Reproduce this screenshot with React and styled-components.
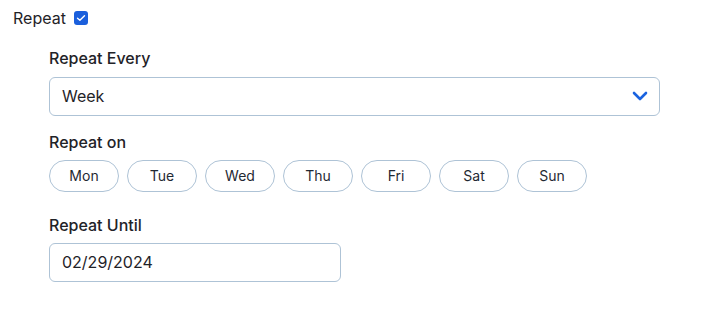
import React, { useState } from 'react';
import styled, { createGlobalStyle } from 'styled-components';

const GlobalStyle = createGlobalStyle`
  body {
    margin: 0;
    background: #ffffff;
    font-family: Inter, "Noto Sans", sans-serif;
    color: #1f2328;
  }
`;

const Page = styled.div`
  padding: 9px 13px;
`;

const RepeatRow = styled.label`
  display: flex;
  align-items: center;
  gap: 8px;
  height: 19px;
  font-size: 16px;
  line-height: 19px;
`;

const CheckBox = styled.span`
  width: 14px;
  height: 14px;
  border-radius: 3px;
  background: #1b5fdc;
  display: flex;
  align-items: center;
  justify-content: center;
  margin-top: -2px;
`;

const Options = styled.div`
  padding-left: 36px;
  margin-top: 21px;
`;

const Field = styled.div`
  display: flex;
  flex-direction: column;
  gap: ${p => p.$gap || 8}px;
  margin-top: ${p => p.$top || 0}px;
`;

const Label = styled.div`
  font-size: 16px;
  line-height: 19px;
  font-weight: 500;
`;

const SelectBox = styled.div`
  box-sizing: border-box;
  width: 611px;
  height: 39px;
  border: 1px solid #aec3d6;
  border-radius: 6px;
  padding: 0 11px 0 12px;
  display: flex;
  align-items: center;
  justify-content: space-between;
  font-size: 16px;
`;

const Days = styled.div`
  display: flex;
  gap: 8px;
`;

const Day = styled.button`
  box-sizing: border-box;
  width: 70px;
  height: 32px;
  border: 1px solid #aec3d6;
  border-radius: 16px;
  background: ${p => (p.$on ? '#e8f0fd' : '#ffffff')};
  font-family: Inter, "Noto Sans", sans-serif;
  font-size: 14px;
  color: #1f2933;
  padding: 0;
  cursor: pointer;
`;

const DateInput = styled.div`
  box-sizing: border-box;
  width: 292px;
  height: 39px;
  border: 1px solid #aec3d6;
  border-radius: 6px;
  padding: 0 12px;
  display: flex;
  align-items: center;
  font-size: 16px;
`;

const days = ['Mon', 'Tue', 'Wed', 'Thu', 'Fri', 'Sat', 'Sun'];

const App = () => {
  const [picked, setPicked] = useState([]);
  const toggle = d =>
    setPicked(p => (p.includes(d) ? p.filter(x => x !== d) : [...p, d]));

  return (
    <Page>
      <GlobalStyle />
      <RepeatRow>
        Repeat
        <CheckBox>
          <svg width="10" height="8" viewBox="0 0 10 8">
            <path d="M1.5 4.2 L3.9 6.3 L8.5 1.7" fill="none" stroke="#fff" strokeWidth="1.4" strokeLinecap="round" strokeLinejoin="round" />
          </svg>
        </CheckBox>
      </RepeatRow>
      <Options>
        <Field $gap={8.7}>
          <Label>Repeat Every</Label>
          <SelectBox>
            Week
            <svg width="16" height="10" viewBox="0 0 16 10">
              <path d="M2 2 L8 8 L14 2" fill="none" stroke="#1a63e0" strokeWidth="2.6" strokeLinecap="round" strokeLinejoin="round" />
            </svg>
          </SelectBox>
        </Field>
        <Field $top={17.3} $gap={7.7}>
          <Label>Repeat on</Label>
          <Days>
            {days.map(d => (
              <Day key={d} $on={picked.includes(d)} onClick={() => toggle(d)}>{d}</Day>
            ))}
          </Days>
        </Field>
        <Field $top={24.3} $gap={7.7}>
          <Label>Repeat Until</Label>
          <DateInput>02/29/2024</DateInput>
        </Field>
      </Options>
    </Page>
  );
};

export default App;
